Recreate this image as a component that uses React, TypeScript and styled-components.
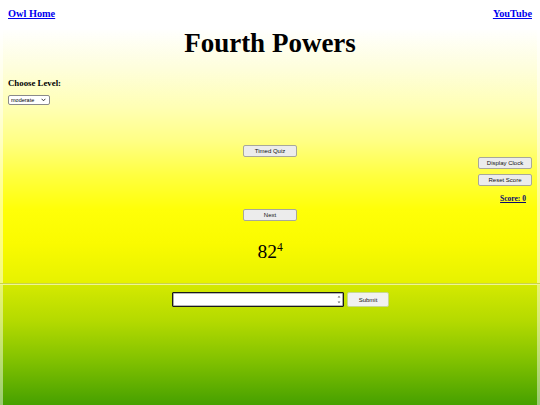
import React from "react";
import styled, { createGlobalStyle } from "styled-components";

const Global = createGlobalStyle`
  html, body { margin: 0; padding: 0; background: #fff; }
  body { font-family: "Liberation Serif", "Times New Roman", serif; }
  * { box-sizing: border-box; }
`;

const Page = styled.div`
  width: 540px;
  height: 405px;
  overflow: hidden;
  display: flex;
  flex-direction: column;
`;

const TopSection = styled.section`
  height: 283px;
  border-left: 3px solid rgba(255, 255, 255, 0.5);
  border-right: 3px solid rgba(255, 255, 255, 0.5);
  padding: 8px 5px 0 5px;
  background: linear-gradient(
    to bottom,
    #ffffff 0%,
    #ffffff 10%,
    #fefedc 24%,
    #ffffb4 38%,
    #ffff84 50%,
    #ffff40 62%,
    #ffff08 74%,
    #fafb00 86%,
    #e6f200 100%
  );
  display: flex;
  flex-direction: column;
`;

const Divider = styled.div`
  height: 2px;
  border-top: 1px solid rgba(150, 150, 90, 0.3);
  border-bottom: 1px solid rgba(255, 255, 230, 0.5);
  background: #dfee40;
`;

const BottomSection = styled.section`
  flex: 1;
  border-left: 3px solid rgba(255, 255, 255, 0.45);
  border-right: 3px solid rgba(255, 255, 255, 0.45);
  padding: 7px 5px 0 5px;
  background: linear-gradient(to bottom, #d4e900 0%, #b4da00 30%, #86c400 60%, #46a000 100%);
`;

const Header = styled.header`
  display: flex;
  justify-content: space-between;
  line-height: 12px;
`;

const TopLink = styled.a`
  font-size: 10.3px;
  font-weight: bold;
  color: #0000ee;
  text-decoration: underline;
`;

const Title = styled.h1`
  margin: 8px 0 0 0;
  font-size: 27px;
  line-height: 31px;
  font-weight: bold;
  text-align: center;
  color: #000;
`;

const LevelLabel = styled.div`
  margin-top: 19px;
  font-size: 8.8px;
  line-height: 10px;
  font-weight: bold;
  color: #000;
`;

const SelectWrap = styled.div`
  position: relative;
  margin-top: 7px;
  width: 42px;
  height: 10px;
`;

const LevelSelect = styled.select`
  display: block;
  appearance: none;
  width: 42px;
  height: 10px;
  padding: 0 0 0 2px;
  margin: 0;
  border: 1px solid #8a8a8a;
  border-radius: 2px;
  background: #fff;
  font-family: "Liberation Sans", Arial, sans-serif;
  font-size: 5.5px;
  line-height: 8px;
  color: #000;
`;

const Chevron = styled.svg`
  position: absolute;
  right: 4px;
  top: 3px;
  pointer-events: none;
`;

const Middle = styled.div`
  margin-top: 40px;
  display: grid;
  grid-template-columns: 1fr 54px 1fr;
`;

const CenterCol = styled.div`
  grid-column: 2;
  display: flex;
  flex-direction: column;
  align-items: center;
`;

const RightCol = styled.div`
  grid-column: 3;
  padding-top: 12px;
  display: flex;
  flex-direction: column;
  align-items: flex-end;
`;

const Btn = styled.button<{ $gap?: number }>`
  width: 54px;
  height: 12px;
  margin: ${(p) => p.$gap ?? 0}px 0 0 0;
  padding: 0;
  border: 1px solid #a8a89a;
  border-radius: 2px;
  background: #ececec;
  font-family: "Liberation Sans", Arial, sans-serif;
  font-size: 6px;
  line-height: 10px;
  color: #111;
`;

const Score = styled.a`
  margin: 8px 6px 0 0;
  font-size: 7.5px;
  line-height: 9px;
  font-weight: bold;
  color: #0a0a6e;
  text-decoration: underline;
`;

const Problem = styled.div`
  margin-top: 20px;
  font-size: 19.5px;
  line-height: 22px;
  color: #000;
  white-space: nowrap;
  sup {
    font-size: 11.5px;
    vertical-align: 7px;
    line-height: 0;
  }
`;

const AnswerRow = styled.form`
  display: flex;
  justify-content: center;
  align-items: center;
  gap: 3px;
  padding-left: 21px;
  margin: 0;
`;

const InputWrap = styled.div`
  position: relative;
  width: 172px;
  height: 15px;
`;

const AnswerInput = styled.input`
  display: block;
  width: 172px;
  height: 15px;
  margin: 0;
  padding: 0 10px 0 2px;
  border: 1px solid #1a1a1a;
  box-shadow: inset 0 0 0 0.6px #707070;
  outline: none;
  border-radius: 1px;
  background: #fff;
  font-size: 8px;
  &::-webkit-inner-spin-button,
  &::-webkit-outer-spin-button {
    -webkit-appearance: none;
    margin: 0;
  }
`;

const Spinner = styled.svg`
  position: absolute;
  right: 3px;
  top: 2px;
  pointer-events: none;
`;

const SubmitBtn = styled(Btn)`
  width: 42px;
  height: 15px;
  border: 1px solid #c8d890;
  background: #f1f1f1;
`;

export default function App() {
  return (
    <>
      <Global />
      <Page>
        <TopSection>
          <Header>
            <TopLink href="#">Owl Home</TopLink>
            <TopLink href="#">YouTube</TopLink>
          </Header>
          <Title>Fourth Powers</Title>
          <LevelLabel>Choose Level:</LevelLabel>
          <SelectWrap>
            <LevelSelect defaultValue="moderate">
              <option value="easy">easy</option>
              <option value="moderate">moderate</option>
              <option value="hard">hard</option>
            </LevelSelect>
            <Chevron width="5" height="4" viewBox="0 0 5 4">
              <path d="M0.6 0.8 L2.5 2.8 L4.4 0.8" fill="none" stroke="#222" strokeWidth="0.9" />
            </Chevron>
          </SelectWrap>
          <Middle>
            <CenterCol>
              <Btn type="button">Timed Quiz</Btn>
              <Btn type="button" $gap={52}>Next</Btn>
              <Problem>
                82<sup>4</sup>
              </Problem>
            </CenterCol>
            <RightCol>
              <Btn type="button">Display Clock</Btn>
              <Btn type="button" $gap={5}>Reset Score</Btn>
              <Score href="#">Score: 0</Score>
            </RightCol>
          </Middle>
        </TopSection>
        <Divider />
        <BottomSection>
          <AnswerRow onSubmit={(e) => e.preventDefault()}>
            <InputWrap>
              <AnswerInput type="number" />
              <Spinner width="4" height="11" viewBox="0 0 4 11">
                <path d="M0.6 3.6 L2 1.8 L3.4 3.6 Z" fill="#666" />
                <path d="M0.6 7.4 L2 9.2 L3.4 7.4 Z" fill="#666" />
              </Spinner>
            </InputWrap>
            <SubmitBtn type="submit">Submit</SubmitBtn>
          </AnswerRow>
        </BottomSection>
      </Page>
    </>
  );
}
